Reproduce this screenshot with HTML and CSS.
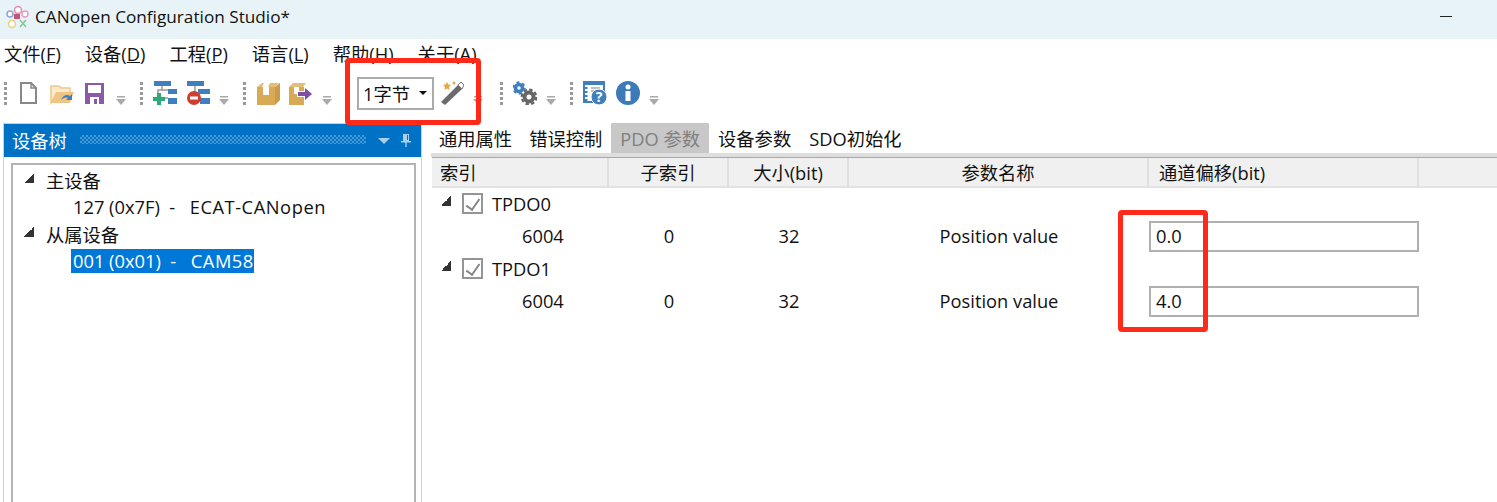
FILE: index.html
```html
<!DOCTYPE html>
<html lang="zh-CN">
<head>
    <meta charset="UTF-8">
    <title>CANopen Configuration Studio</title>
    <link rel="stylesheet" href="styles.css">
</head>
<body>
    <header class="titlebar">
        <svg class="app-logo" width="24" height="24" viewBox="0 0 24 24">
            <circle cx="13" cy="5" r="3.5" fill="#fff" stroke="#e58aa8" stroke-width="1.5"/>
            <circle cx="20" cy="9" r="3" fill="#fff" stroke="#e8a0c0" stroke-width="1.5"/>
            <circle cx="5" cy="9" r="3" fill="#fff" stroke="#8ea6dc" stroke-width="1.5"/>
            <circle cx="7" cy="19" r="3.5" fill="#fff" stroke="#ecd27a" stroke-width="1.5"/>
            <path d="M15 15l6 7M21 15l-6 7" stroke="#8cc79a" stroke-width="1.6"/>
            <rect x="9" y="9" width="6" height="5" fill="#c0567c"/>
        </svg>
        <span class="app-title">CANopen Configuration Studio*</span>
        <span class="minimize"></span>
    </header>

    <nav class="menubar">
        <span>文件(<u>F</u>)</span>
        <span>设备(<u>D</u>)</span>
        <span>工程(<u>P</u>)</span>
        <span>语言(<u>L</u>)</span>
        <span>帮助(<u>H</u>)</span>
        <span>关于(<u>A</u>)</span>
    </nav>

    <div class="toolbar">
        <div class="tool-group">
            <i class="grip"></i>
            <svg class="tool" viewBox="0 0 24 24"><path d="M4 2h10l5 5v15H4z" fill="#fff" stroke="#888" stroke-width="2"/><path d="M14 2v5h5" fill="none" stroke="#888" stroke-width="1.5"/></svg>
            <svg class="tool" viewBox="0 0 24 24"><path d="M1 22V5h8l2 2h9v5H7L1 22z" fill="#fbeacb" stroke="#eec68a" stroke-width="1.5"/><path d="M1 22l5-11h18l-4 11z" fill="#f0c584"/><path d="M11 19c2-5 6-6 9-4l2-2v6h-6l2-2c-2-1-5 0-7 2z" fill="#3f80bd"/></svg>
            <svg class="tool" viewBox="0 0 24 24"><path d="M2 2h19v21H2z" fill="#8a59a8"/><rect x="5" y="4" width="13" height="8" fill="#fff"/><rect x="7" y="16" width="9" height="7" fill="#fff"/><rect x="11" y="18" width="3" height="5" fill="#8a59a8"/></svg>
            <svg class="drop" viewBox="0 0 10 10"><rect x="1" y="1" width="8" height="1.5" fill="#aaa"/><path d="M0 4h10l-5 6z" fill="#aaa"/></svg>
        </div>
        <div class="tool-group">
            <i class="grip"></i>
            <svg class="tool" viewBox="0 0 24 24"><rect x="1" y="0" width="17" height="5" fill="#3f7fbf"/><path d="M9 5v4H5v5" fill="none" stroke="#999" stroke-width="1.5"/><path d="M9 9h6M9 17h6" stroke="#999" stroke-width="1.5"/><rect x="15" y="8" width="9" height="5" fill="#3f7fbf"/><rect x="15" y="17" width="9" height="6" fill="#3f7fbf"/><path d="M6 12v12M0 18h12" stroke="#2fa87a" stroke-width="4"/></svg>
            <svg class="tool" viewBox="0 0 24 24"><rect x="1" y="0" width="17" height="5" fill="#3f7fbf"/><path d="M9 5v6" stroke="#999" stroke-width="1.5"/><rect x="12" y="8" width="12" height="5" fill="#3f7fbf"/><rect x="14" y="17" width="10" height="6" fill="#3f7fbf"/><circle cx="8" cy="17" r="7" fill="#cf3f30"/><rect x="4" y="15.5" width="8" height="3" fill="#fff"/></svg>
            <svg class="drop" viewBox="0 0 10 10"><rect x="1" y="1" width="8" height="1.5" fill="#aaa"/><path d="M0 4h10l-5 6z" fill="#aaa"/></svg>
        </div>
        <div class="tool-group">
            <i class="grip"></i>
            <svg class="tool" viewBox="0 0 24 24"><path d="M1 6l5-4h17l-4 4z" fill="#e4bd76"/><path d="M1 6h18v18H1z" fill="#d9aa55"/><path d="M19 6l5-4v17l-5 5z" fill="#c99a48"/><path d="M7 6v8h6V6z" fill="#fff"/><path d="M8 2h6l-2 4H6z" fill="#fff"/></svg>
            <svg class="tool" viewBox="0 0 24 24"><path d="M0 6l4-4h13l-3 4z" fill="#e4bd76"/><path d="M0 6h15v18H0z" fill="#d9aa55"/><path d="M5 6v7h5V6z" fill="#fff"/><path d="M8 10h7V5l9 8-9 8v-5H8z" fill="#fff"/><path d="M9 11h7V7l7 6-7 6v-4H9z" fill="#7f4fa6"/></svg>
            <svg class="drop" viewBox="0 0 10 10"><rect x="1" y="1" width="8" height="1.5" fill="#aaa"/><path d="M0 4h10l-5 6z" fill="#aaa"/></svg>
        </div>
        <div class="tool-group group-combo">
            <div class="combo"><span>1字节</span><b class="combo-caret"></b></div>
            <svg class="tool" viewBox="0 0 24 24"><path d="M1 21L18 4l4 4L5 24z" fill="#6a6a6a"/><path d="M18 4l3-3 3 3-2 4z" fill="#fff" stroke="#777"/><path d="M7 1l1.400 2.600L11 4 9 6l.4 3L7 7.600 4.600 9 5 6 3 4l2.600-.4z" fill="#e8a83c"/><circle cx="14" cy="2" r="1.500" fill="#e8a83c"/></svg>
            <svg class="drop" viewBox="0 0 10 10"><rect x="1" y="1" width="8" height="1.5" fill="#aaa"/><path d="M0 4h10l-5 6z" fill="#aaa"/></svg>
        </div>
        <div class="tool-group group-gear">
            <i class="grip"></i>
            <svg class="tool" viewBox="0 0 24 24"><circle cx="6" cy="7" r="3.500" fill="none" stroke="#3f7fbf" stroke-width="3.500"/><circle cx="6" cy="7" r="5.800" fill="none" stroke="#3f7fbf" stroke-width="1.800" stroke-dasharray="3 3"/><circle cx="16" cy="16" r="4.500" fill="none" stroke="#666" stroke-width="4"/><circle cx="16" cy="16" r="7.300" fill="none" stroke="#666" stroke-width="2.200" stroke-dasharray="3.500 2.230"/></svg>
            <svg class="drop" viewBox="0 0 10 10"><rect x="1" y="1" width="8" height="1.5" fill="#aaa"/><path d="M0 4h10l-5 6z" fill="#aaa"/></svg>
        </div>
        <div class="tool-group">
            <i class="grip"></i>
            <svg class="tool" viewBox="0 0 24 24"><path d="M1 1h20v20H1z" fill="#fff" stroke="#3f7fbf" stroke-width="2"/><rect x="0" y="0" width="22" height="4" fill="#3f7fbf"/><path d="M3 6v15" stroke="#3f7fbf" stroke-width="3" stroke-dasharray="2 2"/><path d="M8 7h9M8 10h6" stroke="#aaa" stroke-width="1.500"/><circle cx="16" cy="16" r="8" fill="#3f7fbf" stroke="#fff"/><text class="help-mark" x="16" y="21" text-anchor="middle">?</text></svg>
            <svg class="tool" viewBox="0 0 24 24"><circle cx="12" cy="12" r="12" fill="#3d7ab8"/><circle cx="12" cy="6" r="2.500" fill="#fff"/><rect x="9.500" y="10" width="5" height="10" fill="#fff"/></svg>
            <svg class="drop" viewBox="0 0 10 10"><rect x="1" y="1" width="8" height="1.5" fill="#aaa"/><path d="M0 4h10l-5 6z" fill="#aaa"/></svg>
        </div>
    </div>

    <main class="workspace">
        <section class="tree-panel">
            <div class="panel-head">
                <span class="panel-title">设备树</span>
                <i class="panel-dots"></i>
                <b class="panel-caret"></b>
                <svg class="panel-pin" width="10" height="14" viewBox="0 0 10 14"><path d="M2 1h6v7H2zM0 8h10v1.500H0zM4.300 9.500h1.400V14H4.300z" fill="#a9cfee"/><rect x="6" y="2" width="1" height="5" fill="#0072c6"/></svg>
            </div>
            <div class="tree-box">
                <div class="tree-row"><b class="expander"></b><span>主设备</span></div>
                <div class="tree-row tree-leaf"><span>127 (0x7F)&nbsp;&nbsp;-&nbsp;&nbsp;<span class="node-name">ECAT-CANopen</span></span></div>
                <div class="tree-row"><b class="expander"></b><span>从属设备</span></div>
                <div class="tree-row tree-leaf"><span class="selected">001 (0x01)&nbsp;&nbsp;-&nbsp;&nbsp;<span class="node-name">CAM58</span></span></div>
            </div>
        </section>

        <section class="detail-panel">
            <div class="tabs">
                <span class="tab">通用属性</span>
                <span class="tab">错误控制</span>
                <span class="tab tab-active">PDO 参数</span>
                <span class="tab">设备参数</span>
                <span class="tab">SDO初始化</span>
            </div>
            <div class="grid-head">
                <span class="cell-index">索引</span>
                <span>子索引</span>
                <span>大小(bit)</span>
                <span>参数名称</span>
                <span class="cell-offset">通道偏移(bit)</span>
                <span></span>
            </div>
            <div class="grid-row">
                <div class="group-name"><b class="expander"></b><i class="check"></i>TPDO0</div>
            </div>
            <div class="grid-row">
                <span class="row-index">6004</span><span>0</span><span>32</span><span>Position value</span>
                <div class="offset-box">0.0</div>
            </div>
            <div class="grid-row">
                <div class="group-name"><b class="expander"></b><i class="check"></i>TPDO1</div>
            </div>
            <div class="grid-row">
                <span class="row-index">6004</span><span>0</span><span>32</span><span>Position value</span>
                <div class="offset-box">4.0</div>
            </div>
        </section>
    </main>

    <div class="mark mark-combo"></div>
    <div class="mark mark-offset"></div>
</body>
</html>
```

FILE: styles.css
```css
* {
    box-sizing: border-box;
}
html, body {
    margin: 0;
    height: 502px;
    overflow: hidden;
}
body {
    position: relative;
    font-family: "Open Sans", "Noto Sans CJK SC", sans-serif;
    font-size: 18.3px;
    color: #111;
    background: #fff;
}

/* title bar */
.titlebar {
    display: flex;
    align-items: center;
    height: 39px;
    padding: 0 45px 6px 5px;
    background: #e8f3f7;
}
.app-logo {
    margin-right: 6px;
}
.app-title {
    flex: 1;
    font-size: 17.2px;
    padding-bottom: 1px;
}
.minimize {
    width: 12px;
    height: 1px;
    background: #222;
}

/* menu */
.menubar {
    display: flex;
    gap: 24px;
    height: 31px;
    padding: 0 0 4px 4px;
    align-items: center;
    white-space: nowrap;
}

/* toolbar */
.toolbar {
    display: flex;
    height: 53px;
    padding: 0 0 7px 5px;
    align-items: center;
}
.tool-group {
    display: flex;
    align-items: center;
    gap: 9px;
    margin-right: 15px;
}
.group-combo {
    margin-left: 10px;
    gap: 6px;
    margin-right: 18px;
}
.group-combo .drop {
    margin-left: 3px;
}
.grip {
    width: 3px;
    height: 23px;
    margin: 0 1px 0 -1px;
    background: repeating-linear-gradient(#999 0 3px, transparent 3px 5px);
}
.tool {
    width: 24px;
    height: 24px;
}
.drop {
    width: 10px;
    height: 10px;
    margin-top: 14px;
}
.help-mark {
    font-size: 14px;
    font-weight: 700;
    fill: #fff;
}
.combo {
    display: flex;
    align-items: center;
    justify-content: space-between;
    width: 77px;
    height: 33px;
    padding: 0 5px 0 4px;
    border: 2px solid #ababab;
}
.combo-caret {
    border: 4px solid transparent;
    border-top-color: #111;
    border-bottom: 0;
}

/* main area */
.workspace {
    display: flex;
    height: 379px;
}
.tree-panel {
    width: 419px;
    margin-left: 3px;
    border: 1px solid #d0d0d0;
    border-bottom: 0;
}
.panel-head {
    display: flex;
    align-items: center;
    height: 33px;
    padding: 0 10px 2px 8px;
    background: #0072c6;
    color: #fff;
}
.panel-title {
    width: 68px;
}
.panel-dots {
    flex: 1;
    height: 9px;
    background: repeating-conic-gradient(#4a9ad6 0 25%, transparent 0 50%) 0 0 / 4px 4px;
}
.panel-caret {
    margin: 2px 11px 0 12px;
    border: 6px solid transparent;
    border-top-color: #a9cfee;
    border-bottom: 0;
}
.tree-box {
    height: 339px;
    margin: 6px 5px 0 7px;
    border: 2px solid #b4b4b4;
    border-bottom: 0;
    padding-top: 1px;
}
.tree-row {
    display: flex;
    align-items: center;
    height: 27px;
    padding-left: 11px;
}
.tree-row .expander {
    margin-right: 12px;
}
.tree-leaf {
    padding-left: 60px;
}
.node-name {
    margin-left: 5px;
    letter-spacing: 0.55px;
}
.selected {
    padding: 0 0 0 2px;
    margin-left: -2px;
    background: #0078d7;
    color: #fff;
    line-height: 24px;
}
.expander {
    width: 10px;
    height: 10px;
    margin-top: -4px;
    background: linear-gradient(135deg, transparent 50%, #333 50%);
}

/* detail side */
.detail-panel {
    margin-left: 10px;
    flex: 1;
}
.tabs {
    display: flex;
    height: 34px;
    margin-left: -1px;
    padding-left: 0;
    border-bottom: 4px solid #dedede;
}
.tab {
    padding: 0 9px;
    height: 30px;
    line-height: 31px;
    white-space: nowrap;
}
.tab:first-child {
    padding-right: 8px;
    margin-left: -1px;
}
.tab-active {
    background: #c8c8c8;
    color: #808080;
}
.grid-head, .grid-row {
    display: grid;
    grid-template-columns: 177px 120px 120px 300px 270px 1fr;
    align-items: center;
    text-align: center;
}
.grid-head {
    height: 31px;
    background: #f0f0f0;
    border-top: 1px solid #a8a8a8;
    border-bottom: 2px solid #e3e3e3;
}
.grid-head span {
    height: 100%;
    line-height: 30px;
    border-right: 2px solid #e0e0e0;
}
.grid-head span:last-child {
    border-right: 0;
}
.grid-head .cell-index, .grid-head .cell-offset {
    text-align: left;
}
.cell-index {
    padding-left: 8px;
}
.cell-offset {
    padding-left: 10px;
}
.grid-row {
    height: 32.5px;
    padding-bottom: 2px;
}
.grid-row > span {
    margin-bottom: 2px;
}
.row-index {
    padding-left: 90px;
    text-align: left;
}
.group-name {
    grid-column: 1 / -1;
    display: flex;
    align-items: center;
    padding-left: 9px;
}
.check {
    position: relative;
    width: 21px;
    height: 21px;
    margin: 0 9px 0 11px;
    border: 2px solid #959595;
    background: #fff;
}
.check::after {
    content: "";
    position: absolute;
    left: 5px;
    top: 1px;
    width: 6px;
    height: 12px;
    border: solid #868686;
    border-width: 0 2.5px 2.5px 0;
    transform: rotate(35deg);
}
.offset-box {
    height: 31px;
    line-height: 26px;
    padding-left: 5px;
    text-align: left;
    border: 2px solid #b0b0b0;
}

/* red marks drawn over the screenshot */
.mark {
    position: absolute;
    border: 5px solid #ff2a1a;
    border-radius: 4px;
}
.mark-combo {
    left: 345px;
    top: 58px;
    width: 136px;
    height: 67px;
}
.mark-offset {
    left: 1118px;
    top: 210px;
    width: 90px;
    height: 122px;
}
```
